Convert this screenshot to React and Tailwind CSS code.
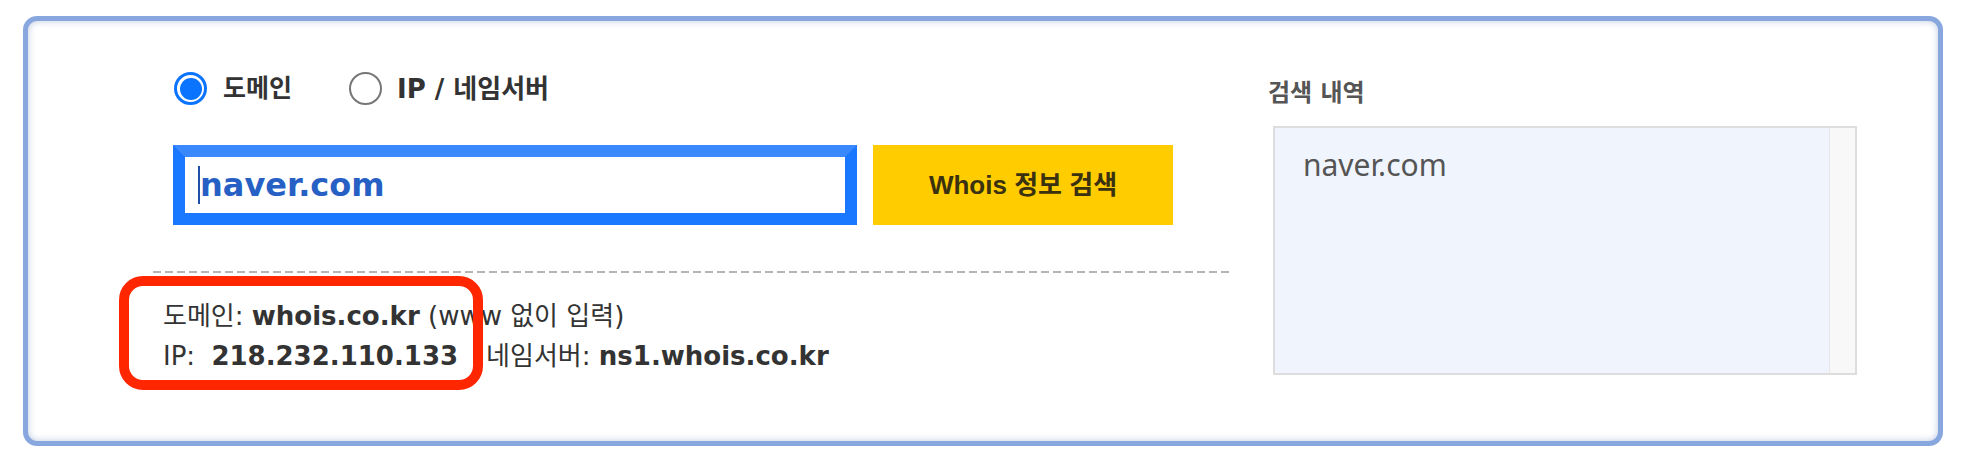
export default function App() {
  return (
    <div className="min-h-screen bg-white pt-[16px] pl-[23px] font-['DejaVu_Sans','Noto_Sans_CJK_KR',sans-serif] text-[#333]">
      <div className="flex h-[430px] w-[1920px] rounded-[14px] border-[5px] border-[#88a7df] bg-white shadow-[inset_0_0_7px_rgba(110,135,185,0.45)]">
        {/* search form */}
        <div className="ml-[125px] w-[1077px] pt-[51px]">
          <div className="ml-[21px] flex h-[33px] items-center">
            <span className="flex h-[33px] w-[33px] items-center justify-center rounded-full border-[3px] border-[#0b74ff]">
              <span className="h-[22px] w-[22px] rounded-full bg-[#0b74ff]" />
            </span>
            <span className="ml-[16px] text-[25px] font-bold leading-none text-[#333]">도메인</span>
            <span className="ml-[57px] h-[33px] w-[33px] rounded-full border-2 border-[#767676]" />
            <span className="ml-[15px] text-[26px] font-bold leading-none text-[#333]">IP / 네임서버</span>
          </div>

          <div className="mt-[40px] ml-[20px] flex gap-[16px]">
            <div className="flex h-[80px] w-[684px] items-center border-[12px] border-[#1a77ff] border-t-[#3a88fd] bg-white pl-[13px]">
              <span className="h-[38px] w-[2px] bg-[#1f4fa8]" />
              <span className="text-[32px] font-bold leading-none text-[#2760c5]">naver.com</span>
            </div>
            <button className="flex h-[80px] w-[300px] items-center justify-center bg-[#ffcc00] font-['Liberation_Sans','Noto_Sans_CJK_KR',sans-serif] text-[26px] font-bold text-[#3a3110]">
              Whois 정보 검색
            </button>
          </div>

          <div className="mt-[46px] h-[2px] bg-[repeating-linear-gradient(to_right,#b5b5b5_0,#b5b5b5_8px,transparent_8px,transparent_12px)]" />

          <div className="relative mt-[23px] ml-[10px] text-[26px] leading-[40px]">
            <p>
              도메인: <b>whois.co.kr</b> (www 없이 입력)
            </p>
            <p>
              IP: <b className="ml-[8px]">218.232.110.133</b>
              <span className="ml-[28px]">네임서버: </span>
              <b>ns1.whois.co.kr</b>
            </p>
            {/* highlight annotation */}
            <div className="absolute left-[-44px] top-[-20px] h-[114px] w-[364px] rounded-[24px] border-[10px] border-[#ff2600]" />
          </div>
        </div>

        {/* search history */}
        <div className="ml-[38px] pt-[57px]">
          <h2 className="text-[24px] font-bold leading-[30px] text-[#555]">검색 내역</h2>
          <div className="mt-[18px] ml-[5px] flex h-[249px] w-[584px] border-2 border-[#dddddd] bg-[#f0f4fc]">
            <div className="flex-1 pl-[28px] pt-[19px] font-['Noto_Sans',sans-serif] text-[30px] leading-[36px] text-[#555]">
              naver.com
            </div>
            <div className="w-[26px] border-l border-[#e6e6e6] bg-[#f8f8f8]" />
          </div>
        </div>
      </div>
    </div>
  );
}
